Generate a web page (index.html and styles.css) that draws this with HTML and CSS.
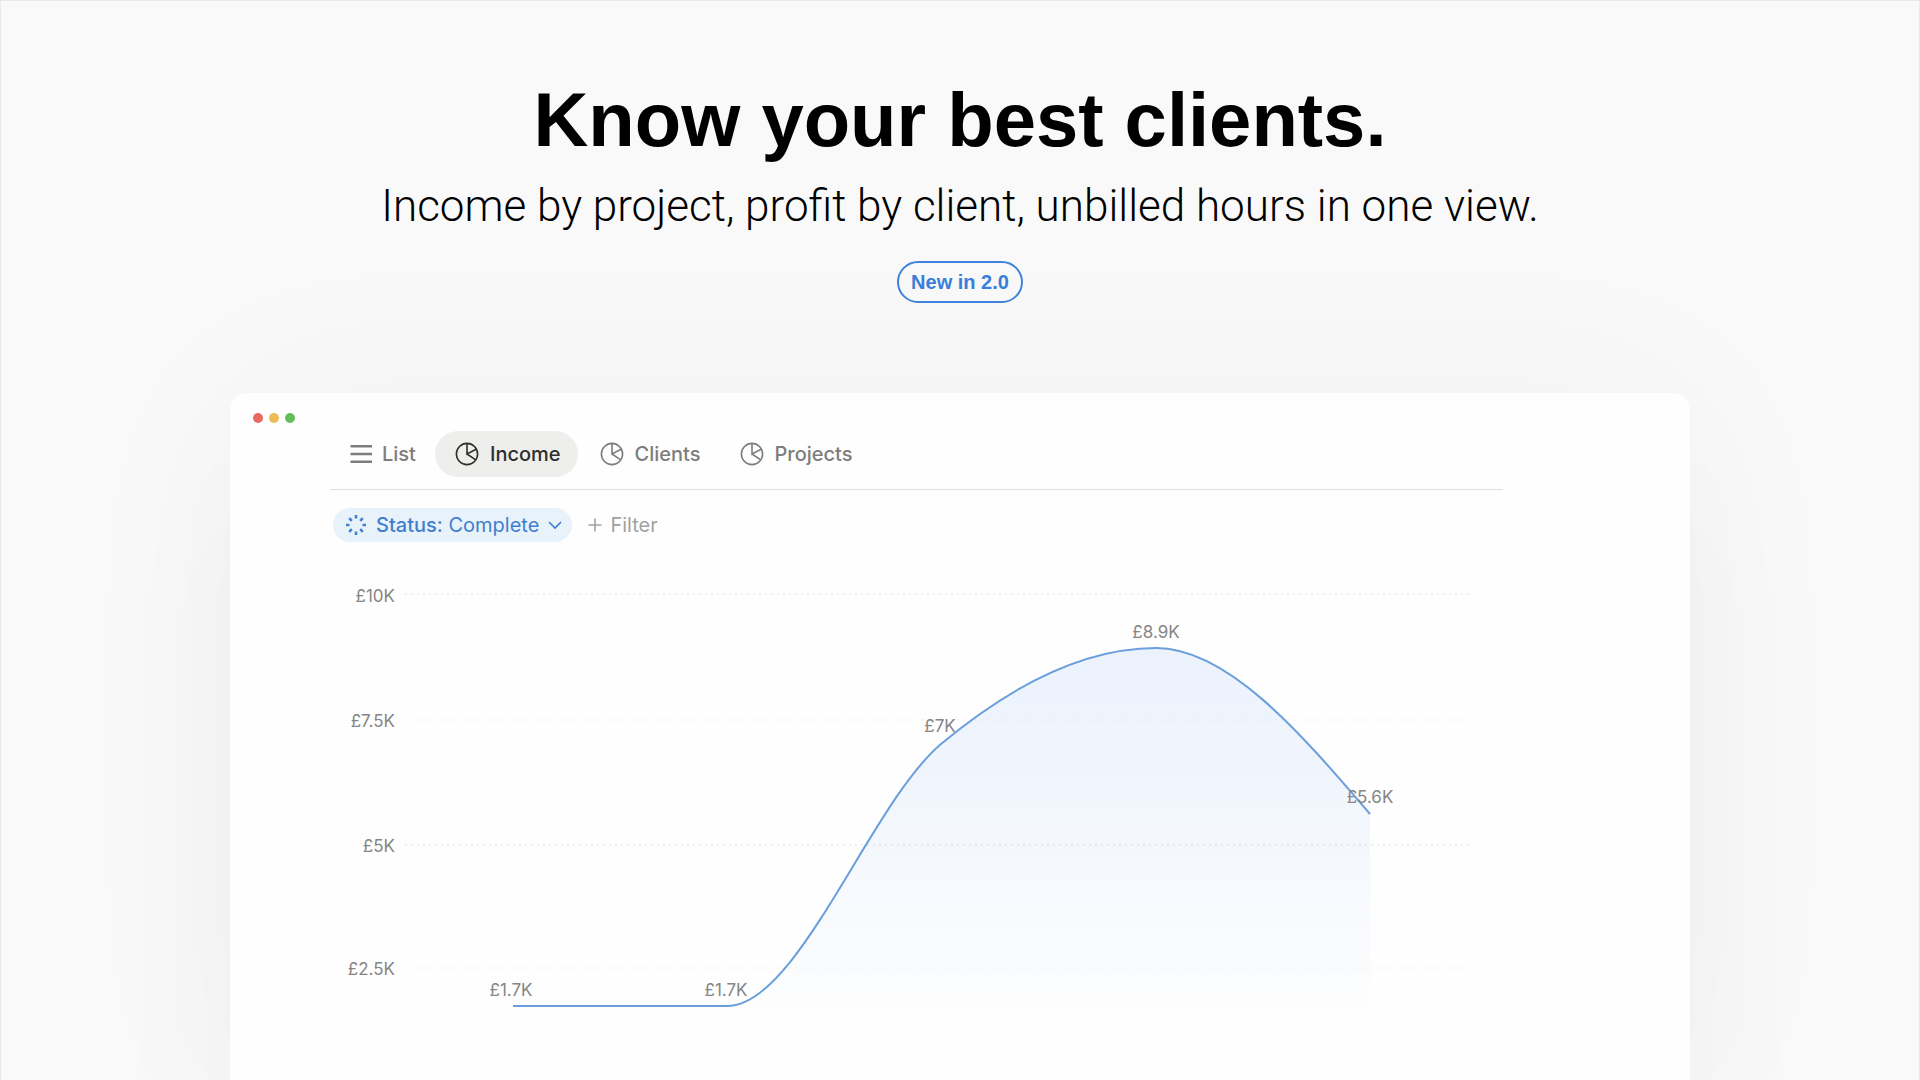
FILE: index.html
```html
<!DOCTYPE html>
<html lang="en">
<head>
  <meta charset="UTF-8" />
  <meta name="viewport" content="width=device-width, initial-scale=1.0" />
  <title>Know your best clients</title>
  <link rel="stylesheet" href="styles.css">
</head>
<body>
  <main class="page">
    <header class="hero">
      <h1>Know your best clients.</h1>
      <p class="subtitle">Income by project, profit by client, unbilled hours in one view.</p>
      <span class="badge">New in 2.0</span>
    </header>

    <section class="window">
      <div class="dots">
        <span class="dot red"></span>
        <span class="dot yellow"></span>
        <span class="dot green"></span>
      </div>

      <div class="content">
        <nav class="tabs">
          <button class="tab list" type="button">
            <svg class="icon" viewBox="0 0 24 24"><path d="M.5 4.200H22M.5 12H22M.5 19.800H22" stroke-width="2.400"/></svg>
            List
          </button>
          <button class="tab active" type="button">
            <svg class="icon" viewBox="0 0 24 24"><circle cx="12" cy="12" r="10.6"/><path d="M12 1.4V12l9.600-5M12 12l8.800 5.800"/></svg>
            Income
          </button>
          <button class="tab" type="button">
            <svg class="icon" viewBox="0 0 24 24"><circle cx="12" cy="12" r="10.6"/><path d="M12 1.4V12l9.600-5M12 12l8.800 5.800"/></svg>
            Clients
          </button>
          <button class="tab" type="button">
            <svg class="icon" viewBox="0 0 24 24"><circle cx="12" cy="12" r="10.6"/><path d="M12 1.4V12l9.600-5M12 12l8.800 5.800"/></svg>
            Projects
          </button>
        </nav>

        <div class="filters">
          <button class="status" type="button" aria-haspopup="listbox">
            <svg class="spinner" viewBox="0 0 22 22"><path d="M11 1v3.500M11 17.500v3.500M1 11h3.500M17.500 11h3.500M4.200 4.200l2.600 2.600M15.200 15.200l2.600 2.600M17.800 4.200l-2.600 2.600M6.800 15.200l-2.600 2.600"/></svg>
            <span><b>Status:</b> Complete</span>
            <svg class="chevron" viewBox="0 0 14 14"><path d="M1 4l6 6 6-6"/></svg>
          </button>
          <button class="add" type="button">
            <svg class="plus" viewBox="0 0 14 14"><path d="M7 .5v13M.5 7h13"/></svg>
            Filter
          </button>
        </div>

        <svg class="chart" viewBox="0 0 1173 520" role="img" aria-label="Income chart">
          <defs>
            <linearGradient id="area" x1="0" y1="88" x2="0" y2="470" gradientUnits="userSpaceOnUse">
              <stop offset="0" stop-color="#4a8cf0" stop-opacity="0.1"/>
              <stop offset="0.35" stop-color="#4a8cf0" stop-opacity="0.075"/>
              <stop offset="1" stop-color="#4a8cf0" stop-opacity="0"/>
            </linearGradient>
          </defs>
          <g class="grid">
            <path d="M75 34H1143"/>
            <path class="faint" d="M75 160H1143"/>
            <path d="M75 285H1143"/>
            <path class="faint" d="M75 408H1143"/>
          </g>
          <g class="axis">
            <text x="65" y="42">£10K</text>
            <text x="65" y="167">£7.5K</text>
            <text x="65" y="292">£5K</text>
            <text x="65" y="415">£2.5K</text>
          </g>
          <path class="area" d="M183 446H397C468 446 540 244 611 184C683 124 754 88 826 88C897 88 969 171 1040 254V520H183Z"/>
          <path class="line" d="M183 446H397C468 446 540 244 611 184C683 124 754 88 826 88C897 88 969 171 1040 254"/>
          <g class="values">
            <text x="181" y="436">£1.7K</text>
            <text x="396" y="436">£1.7K</text>
            <text x="610" y="172">£7K</text>
            <text x="826" y="78">£8.9K</text>
            <text x="1040" y="243">£5.6K</text>
          </g>
        </svg>
      </div>
    </section>
  </main>
</body>
</html>
```
FILE: styles.css
```css
* {
  box-sizing: border-box;
}
body {
  margin: 0;
  background: #f9f9f9;
  font-family: Inter, sans-serif;
  color: #000;
}
.page {
  height: 100vh;
  display: flex;
  flex-direction: column;
  padding: 0 40px;
  border: 1px solid #e9e9e9;
  border-bottom: none;
  overflow: hidden;
}
.hero {
  display: flex;
  flex-direction: column;
  align-items: center;
  padding: 73px 0 90px;
  text-align: center;
}
.hero h1 {
  margin: 0;
  font-family: "Liberation Sans", sans-serif;
  font-size: 76px;
  line-height: 92px;
  font-weight: bold;
}
.subtitle {
  margin: 9px 0 24px;
  font-family: Roboto, sans-serif;
  font-size: 44px;
  line-height: 62px;
  font-weight: 300;
}
.badge {
  padding: 0 12px;
  border: 2px solid #3f83dc;
  border-radius: 21px;
  font-family: "Liberation Sans", sans-serif;
  font-size: 20px;
  line-height: 38px;
  font-weight: bold;
  color: #3a7fd9;
}
.window {
  flex: 1 0 auto;
  width: 100%;
  max-width: 1460px;
  margin: 0 auto;
  background: #fefefe;
  border-radius: 18px 18px 0 0;
  box-shadow: 0 120px 160px rgba(0,0,0,0.03), 0 0 200px rgba(0,0,0,0.035);
}
.dots {
  display: flex;
  gap: 6px;
  padding: 20px 23px 8px;
}
.dot {
  width: 10px;
  height: 10px;
  border-radius: 50%;
}
.red {
  background: #e8695f;
}
.yellow {
  background: #edbb55;
}
.green {
  background: #63be5c;
}
.content {
  padding: 0 187px 0 100px;
}
button {
  display: flex;
  align-items: center;
  border: none;
  background: none;
  font-family: inherit;
  font-size: 20px;
  cursor: pointer;
}
svg {
  fill: none;
  stroke: currentColor;
}
.tabs {
  display: flex;
  gap: 2px;
  padding-bottom: 12px;
  border-bottom: 1px solid #dedede;
}
.tab {
  gap: 11px;
  height: 46px;
  padding: 0 17px 0 20px;
  border-radius: 23px;
  color: #7d7d7b;
  font-weight: 500;
}
.tab.list {
  gap: 8px;
}
.tab.active {
  background: #eeeeec;
  color: #2e2e2c;
}
.icon {
  width: 24px;
  height: 24px;
  stroke-width: 1.6;
}
.filters {
  display: flex;
  gap: 16px;
  padding-top: 18px;
}
.status {
  gap: 9px;
  height: 34px;
  margin-left: 3px;
  padding: 0 10px 0 12px;
  border-radius: 17px;
  background: #e8f2fb;
  color: #3f7fce;
}
.status b {
  font-weight: 500;
}
.spinner {
  width: 22px;
  height: 22px;
  stroke-width: 2.6;
}
.chevron {
  width: 14px;
  height: 14px;
  stroke-width: 1.6;
}
.add {
  gap: 8px;
  padding: 0;
  color: #a2a2a0;
}
.plus {
  width: 14px;
  height: 14px;
  stroke-width: 1.6;
}
.chart {
  display: block;
  width: 100%;
  margin-top: 18px;
}
.chart text {
  fill: #858585;
  stroke: none;
  font-size: 17px;
}
.grid {
  stroke: #e0e0e0;
  stroke-dasharray: 2 4;
}
.grid .faint {
  stroke: #ebebeb;
}
.axis {
  text-anchor: end;
}
.values {
  text-anchor: middle;
}
.area {
  fill: url(#area);
  stroke: none;
}
.line {
  stroke: #6a9fdc;
  stroke-width: 2;
}
```
